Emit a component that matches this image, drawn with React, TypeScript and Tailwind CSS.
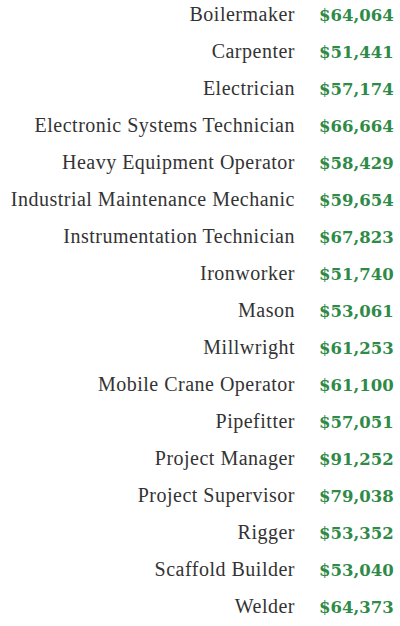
const rows: [string, string][] = [
  ['Boilermaker', '$64,064'],
  ['Carpenter', '$51,441'],
  ['Electrician', '$57,174'],
  ['Electronic Systems Technician', '$66,664'],
  ['Heavy Equipment Operator', '$58,429'],
  ['Industrial Maintenance Mechanic', '$59,654'],
  ['Instrumentation Technician', '$67,823'],
  ['Ironworker', '$51,740'],
  ['Mason', '$53,061'],
  ['Millwright', '$61,253'],
  ['Mobile Crane Operator', '$61,100'],
  ['Pipefitter', '$57,051'],
  ['Project Manager', '$91,252'],
  ['Project Supervisor', '$79,038'],
  ['Rigger', '$53,352'],
  ['Scaffold Builder', '$53,040'],
  ['Welder', '$64,373'],
];

export default function App() {
  return (
    <div className="min-h-[626px] w-[400px] bg-white">
      <div className="flex flex-col gap-[7px]">
        {rows.map(([trade, wage]) => (
          <div key={trade} className="flex h-[30px] items-baseline">
            <span className="w-[295px] text-right font-['Liberation_Serif',serif] text-[20px] leading-[29px] tracking-[0.5px] text-[#333]">
              {trade}
            </span>
            <span className="ml-[24px] font-['DejaVu_Serif',serif] text-[16.5px] leading-[29px] font-bold text-[#2f8a48]">
              {wage}
            </span>
          </div>
        ))}
      </div>
    </div>
  );
}
